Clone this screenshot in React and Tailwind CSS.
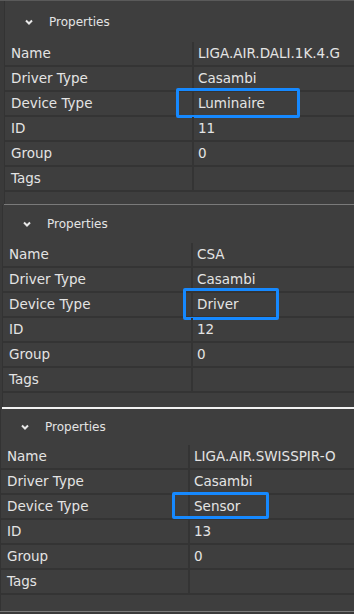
import React from 'react';

const panels = [
  {
    name: 'LIGA.AIR.DALI.1K.4.G',
    id: '11',
    type: 'Luminaire',
    left: 'pl-[4px]',
    headH: 'h-[41px]',
    box: 'left-[171px] top-[-4px] w-[124px] h-[30px]',
    colW: 'w-[189px]',
    endLine: 'h-[1px] bg-[#7a7a7a]',
    bottom: 'h-[12px]',
  },
  {
    name: 'CSA',
    id: '12',
    type: 'Driver',
    left: 'pl-[2px]',
    headH: 'h-[38px]',
    box: 'left-[180px] top-[-5px] w-[96px] h-[32px]',
    colW: 'w-[190px]',
    endLine: 'h-[2px] bg-[#f2f2f2]',
    bottom: 'h-[14px]',
  },
  {
    name: 'LIGA.AIR.SWISSPIR-O',
    id: '13',
    type: 'Sensor',
    left: 'pl-0',
    headH: 'h-[36px]',
    box: 'left-[171px] top-[-3px] w-[97px] h-[27px]',
    colW: 'w-[189px]',
    endLine: 'h-[1px] bg-[#7a7a7a]',
    bottom: 'h-[16px]',
  },
];

function Chevron() {
  return (
    <svg width="8" height="6" viewBox="0 0 8 6" className="shrink-0">
      <path d="M1 1.5 L4 4.5 L7 1.5" fill="none" stroke="#e8e8e8" strokeWidth="2" />
    </svg>
  );
}

function Row({ label, value, colW, children }) {
  return (
    <div className="relative flex h-[25px] border-b-2 border-[#343434]">
      <div className={`${colW} shrink-0 flex items-center pl-[6px] border-r-2 border-[#343434]`}>{label}</div>
      <div className="flex-1 flex items-center pl-[4px] whitespace-nowrap overflow-hidden">{value}</div>
      {children}
    </div>
  );
}

function Panel({ p }) {
  return (
    <div className={`${p.left} bg-[#3a3a3a]`}>
      <div className="bg-[#3e3e3e] border-l border-[#333333]">
        <div className={`${p.headH} flex items-center gap-[16px] pl-[20px] text-[12px]`}>
          <Chevron />
          <span>Properties</span>
        </div>
        <div className="text-[13.5px]">
          <Row label="Name" value={p.name} colW={p.colW} />
          <Row label="Driver Type" value="Casambi" colW={p.colW} />
          <Row label="Device Type" value={p.type} colW={p.colW}>
            <div className={`absolute ${p.box} border-[3px] border-[#1689ff] rounded-[2px]`} />
          </Row>
          <Row label="ID" value={p.id} colW={p.colW} />
          <Row label="Group" value="0" colW={p.colW} />
          <Row label="Tags" value="" colW={p.colW} />
        </div>
        <div className={p.bottom} />
      </div>
      <div className={p.endLine} />
    </div>
  );
}

export default function App() {
  return (
    <div
      className="w-[354px] h-[614px] overflow-hidden bg-[#3a3a3a] text-[#e4e4e4]"
      style={{ fontFamily: '"DejaVu Sans", sans-serif' }}
    >
      <div className="h-[1px] bg-[#5a5a5a]" />
      {panels.map((p) => (
        <Panel key={p.id} p={p} />
      ))}
    </div>
  );
}
